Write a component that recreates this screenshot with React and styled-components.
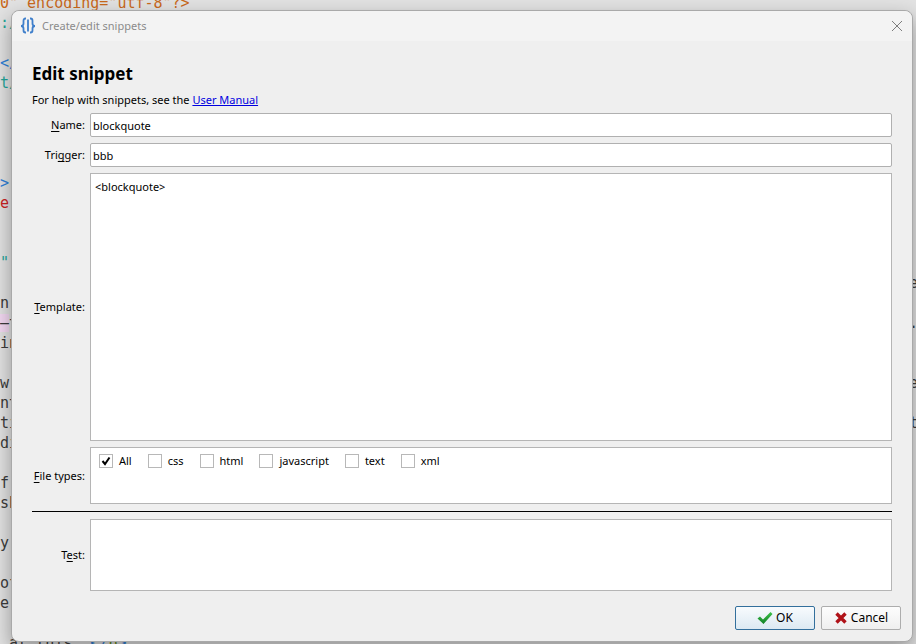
import React, { useState } from 'react';
import styled, { createGlobalStyle } from 'styled-components';


const GlobalStyle = createGlobalStyle`
  * {
    box-sizing: border-box;
  }
  body {
    margin: 0;
    font-family: "Noto Sans", "Open Sans", sans-serif;
    font-size: 11px;
    line-height: 16px;
    color: #000;
  }
`;

const Screen = styled.div`
  display: grid;
  grid-template: minmax(0, 1fr) / minmax(0, 1fr);
  height: 100vh;
  overflow: hidden;
  background: #e2e2e2;
`;
const Code = styled.div`
  grid-area: 1 / 1;
  margin-top: -7px;
  font-family: "DejaVu Sans Mono", monospace;
  font-size: 15px;
  color: #3c3c3c;
`;
const Line = styled.div`
  display: flex;
  justify-content: space-between;
  height: 20px;
  line-height: 20px;
  white-space: pre;
`;
const Token = styled.span`
  color: ${p => p.color};
  background: ${p => p.mark || 'none'};
`;
const LineEnd = styled.span`
  width: 7px;
`;

const Dialog = styled.div`
  grid-area: 1 / 1;
  z-index: 1;
  display: flex;
  flex-direction: column;
  margin: 10px 3px 2px 11px;
  border: 1px solid #a9a9a9;
  border-radius: 8px;
  background: #efefef;
  box-shadow: 0 8px 20px rgba(0, 0, 0, 0.35);
`;
const TitleBar = styled.header`
  display: flex;
  align-items: center;
  gap: 6px;
  height: 30px;
  padding: 0 9px 0 8px;
  border-radius: 8px 8px 0 0;
  background: #f3f3f3;
  color: #8b8b8b;
`;
const Title = styled.span`
  flex: 1;
`;
const CloseButton = styled.button`
  display: flex;
  padding: 0;
  border: 0;
  background: none;
  color: #7d7d7d;
`;
const Form = styled.form`
  flex: 1;
  display: flex;
  flex-direction: column;
  padding: 21px 11px 11px;
`;
const Content = styled.div`
  flex: 1;
  display: flex;
  flex-direction: column;
  padding: 0 9px;
`;
const Heading = styled.h2`
  margin: 0;
  font-size: 17px;
  line-height: 24px;
`;
const Help = styled.p`
  margin: 6px 0 5px;
`;
const Link = styled.a`
  color: #0000e0;
`;
const Fields = styled.div`
  flex: 1;
  display: grid;
  grid-template-columns: 53px minmax(0, 1fr);
  grid-template-rows: 24px 24px minmax(80px, 1fr) 57px 3px 72px;
  gap: 6px 5px;
  align-items: center;
`;
const Label = styled.label`
  justify-self: end;
  white-space: nowrap;
`;
const Key = styled.u`
  text-decoration-skip-ink: none;
  text-underline-offset: 2px;
`;
const Input = styled.input`
  width: 100%;
  height: 24px;
  padding: 0 2px;
  border: 1px solid #b0b0b0;
  border-radius: 2px;
  background: #fff;
  font: inherit;
  outline: 0;
`;
const TextArea = styled.textarea`
  display: block;
  width: 100%;
  height: 100%;
  padding: 5px 4px;
  border: 1px solid #b5b5b5;
  border-radius: 0;
  background: #fff;
  font: inherit;
  outline: 0;
  resize: none;
`;
const FileTypes = styled.div`
  display: flex;
  align-items: flex-start;
  gap: 16px;
  height: 100%;
  padding: 5px 8px;
  border: 1px solid #b5b5b5;
  background: #fff;
`;
const CheckLabel = styled.label`
  display: flex;
  align-items: center;
  gap: 6px;
`;
const CheckMark = styled.span`
  display: grid;
  width: 14px;
  height: 14px;

  & > * {
    grid-area: 1 / 1;
  }
`;
const CheckBox = styled.input`
  appearance: none;
  width: 14px;
  height: 14px;
  margin: 0;
  border: 1px solid #b8b8b8;
  background: #fff;
`;
const Divider = styled.hr`
  grid-column: 1 / -1;
  width: 100%;
  height: 1px;
  margin: 0;
  border: 0;
  background: #000;
`;
const Buttons = styled.div`
  display: flex;
  justify-content: flex-end;
  gap: 6px;
  padding-top: 15px;
`;
const Button = styled.button`
  display: flex;
  align-items: center;
  justify-content: center;
  gap: 3px;
  width: 80px;
  height: 24px;
  padding: 0;
  border: 1px solid ${p => (p.$primary ? '#336f9c' : '#adadad')};
  border-radius: 2px;
  background: ${p => (p.$primary
    ? 'linear-gradient(#f8fbfd, #dce9f2)'
    : 'linear-gradient(#fdfdfd, #efefef)')};
  color: #000;
  font: inherit;
  font-size: 12px;
`;


const teal = '#1fa59a';
const blue = '#2f80d8';
const red = '#cc2222';
const orange = '#c9691c';

// one entry per editor line: tokens at the left edge, text cut at the right edge
const lines = [
  { tokens: [['0" encoding="utf-8"?>', orange]] },
  { tokens: [[':/', teal]] },
  {},
  { tokens: [['</', blue]] },
  { tokens: [['t/', teal]] },
  {},
  {},
  {},
  {},
  { tokens: [['>', blue]] },
  { tokens: [['er', red]] },
  {},
  {},
  { tokens: [['"', teal], [';', blue]] },
  { tokens: [[' r']], end: 'e' },
  { tokens: [['n']] },
  { tokens: [['—', '#3c3c3c', '#f3d8f2'], ['t']], end: '.' },
  { tokens: [['in']] },
  {},
  { tokens: [['w']], end: 'e' },
  { tokens: [['nt']] },
  { tokens: [['ti']], end: 't' },
  { tokens: [['di']] },
  {},
  { tokens: [['f,']] },
  { tokens: [['sh']] },
  {},
  { tokens: [['y']] },
  {},
  { tokens: [['of']] },
  { tokens: [['e']] },
  {},
  { tokens: [[' at this. '], ['</', blue], ['p', '#5f8a10'], ['>', blue]] },
];

const types = ['All', 'css', 'html', 'javascript', 'text', 'xml'];


const Editor = () => (
  <Code>
    {lines.map((line, i) => (
      <Line key={i}>
        <span>
          {(line.tokens || []).map(([text, color, mark]) => (
            <Token key={text} color={color} mark={mark}>{text}</Token>
          ))}
        </span>
        {line.end && <LineEnd>{line.end}</LineEnd>}
      </Line>
    ))}
  </Code>
);

const Logo = () => (
  <svg width="16" height="18" viewBox="0 0 16 18" fill="none" stroke="#3f7fcb" strokeWidth="1.8">
    <path d="M6 1.500H5.500Q3.500 1.500 3.500 3.800V6.500Q3.500 9 1 9Q3.500 9 3.500 11.500V13.200Q3.500 15.500 5.500 15.500H6" />
    <path d="M10 1.500H10.500Q12.500 1.500 12.500 3.800V6.500Q12.500 9 15 9Q12.500 9 12.500 11.500V13.200Q12.500 15.500 10.500 15.500H10" />
    <path d="M8 2.500V14.500" />
  </svg>
);

const FileType = ({ name, checked, onChange }) => (
  <CheckLabel>
    <CheckMark>
      <CheckBox type="checkbox" checked={checked} onChange={onChange} />
      {checked && (
        <svg width="14" height="14" viewBox="0 0 14 14" fill="none" stroke="#000" strokeWidth="2" pointerEvents="none">
          <path d="M3.500 7L6 10L10.500 3.500" />
        </svg>
      )}
    </CheckMark>
    {name}
  </CheckLabel>
);

const App = () => {
  const [name, setName] = useState('blockquote');
  const [trigger, setTrigger] = useState('bbb');
  const [template, setTemplate] = useState('<blockquote>');
  const [test, setTest] = useState('');
  const [selected, setSelected] = useState(['All']);

  const toggle = type => setSelected(
    selected.includes(type) ? selected.filter(t => t !== type) : [...selected, type]
  );

  return (
    <Screen>
      <GlobalStyle />
      <Editor />
      <Dialog role="dialog" aria-labelledby="title">
        <TitleBar>
          <Logo />
          <Title id="title">Create/edit snippets</Title>
          <CloseButton type="button" aria-label="Close">
            <svg width="12" height="12" viewBox="0 0 12 12" fill="none" stroke="currentColor">
              <path d="M1 1L11 11M11 1L1 11" />
            </svg>
          </CloseButton>
        </TitleBar>
        <Form onSubmit={e => e.preventDefault()}>
          <Content>
            <Heading>Edit snippet</Heading>
            <Help>
              For help with snippets, see the <Link href="#manual">User Manual</Link>
            </Help>
            <Fields>
              <Label htmlFor="name"><Key>N</Key>ame:</Label>
              <Input id="name" value={name} onChange={e => setName(e.target.value)} />
              <Label htmlFor="trigger">Tri<Key>g</Key>ger:</Label>
              <Input id="trigger" value={trigger} onChange={e => setTrigger(e.target.value)} />
              <Label htmlFor="template"><Key>T</Key>emplate:</Label>
              <TextArea id="template" value={template} onChange={e => setTemplate(e.target.value)} />
              <Label as="span" id="types"><Key>F</Key>ile types:</Label>
              <FileTypes role="group" aria-labelledby="types">
                {types.map(type => (
                  <FileType
                    key={type}
                    name={type}
                    checked={selected.includes(type)}
                    onChange={() => toggle(type)}
                  />
                ))}
              </FileTypes>
              <Divider />
              <Label htmlFor="test">T<Key>e</Key>st:</Label>
              <TextArea id="test" value={test} onChange={e => setTest(e.target.value)} />
            </Fields>
          </Content>
          <Buttons>
            <Button type="submit" $primary>
              <svg width="16" height="14" viewBox="0 0 16 14">
                <defs>
                  <linearGradient id="tick" x1="0" y1="0" x2="0" y2="1">
                    <stop offset="0" stopColor="#3cc24a" />
                    <stop offset="1" stopColor="#128026" />
                  </linearGradient>
                </defs>
                <path d="M0.500 7.500L3 5.500L6 8.500L13.500 1L15.500 3L6.500 13Z" fill="url(#tick)" />
              </svg>
              OK
            </Button>
            <Button type="button">
              <svg width="14" height="14" viewBox="0 0 14 14" fill="none" stroke="#b01218" strokeWidth="3.400">
                <path d="M2.500 2.500L11.500 11.500M11.500 2.500L2.500 11.500" />
              </svg>
              Cancel
            </Button>
          </Buttons>
        </Form>
      </Dialog>
    </Screen>
  );
};

export default App;
